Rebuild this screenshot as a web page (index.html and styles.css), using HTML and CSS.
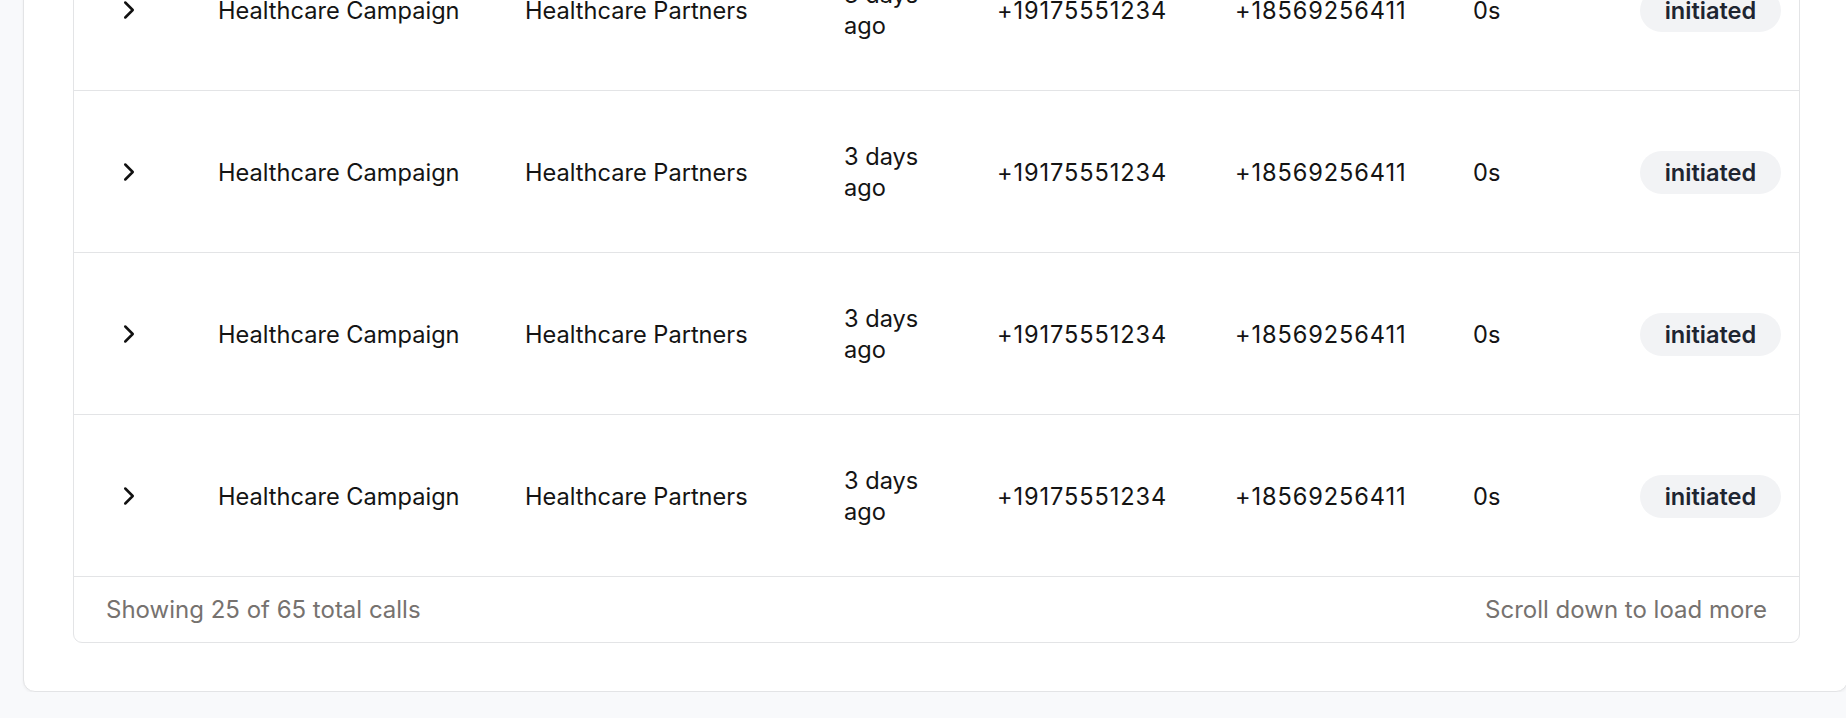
FILE: index.html
```html
<!DOCTYPE html>
<html lang="en">
<head>
<meta charset="utf-8">
<title>Calls</title>
<link rel="stylesheet" href="styles.css">
</head>
<body>
<div class="page">
  <section class="card">
    <div class="table">
      <div class="row">
        <div class="cell chev"><svg viewBox="0 0 24 24" width="30" height="30"><path d="m9 18 6-6-6-6"/></svg></div>
        <div class="cell c1">Healthcare Campaign</div>
        <div class="cell c2">Healthcare Partners</div>
        <div class="cell c3">3 days ago</div>
        <div class="cell phone">+19175551234</div>
        <div class="cell phone">+18569256411</div>
        <div class="cell c6">0s</div>
        <div class="cell c7"><span class="badge">initiated</span></div>
      </div>
      <div class="row">
        <div class="cell chev"><svg viewBox="0 0 24 24" width="30" height="30"><path d="m9 18 6-6-6-6"/></svg></div>
        <div class="cell c1">Healthcare Campaign</div>
        <div class="cell c2">Healthcare Partners</div>
        <div class="cell c3">3 days ago</div>
        <div class="cell phone">+19175551234</div>
        <div class="cell phone">+18569256411</div>
        <div class="cell c6">0s</div>
        <div class="cell c7"><span class="badge">initiated</span></div>
      </div>
      <div class="row">
        <div class="cell chev"><svg viewBox="0 0 24 24" width="30" height="30"><path d="m9 18 6-6-6-6"/></svg></div>
        <div class="cell c1">Healthcare Campaign</div>
        <div class="cell c2">Healthcare Partners</div>
        <div class="cell c3">3 days ago</div>
        <div class="cell phone">+19175551234</div>
        <div class="cell phone">+18569256411</div>
        <div class="cell c6">0s</div>
        <div class="cell c7"><span class="badge">initiated</span></div>
      </div>
      <div class="row">
        <div class="cell chev"><svg viewBox="0 0 24 24" width="30" height="30"><path d="m9 18 6-6-6-6"/></svg></div>
        <div class="cell c1">Healthcare Campaign</div>
        <div class="cell c2">Healthcare Partners</div>
        <div class="cell c3">3 days ago</div>
        <div class="cell phone">+19175551234</div>
        <div class="cell phone">+18569256411</div>
        <div class="cell c6">0s</div>
        <div class="cell c7"><span class="badge">initiated</span></div>
      </div>
      <div class="footer">
        <span>Showing 25 of 65 total calls</span>
        <span>Scroll down to load more</span>
      </div>
    </div>
  </section>
</div>
</body>
</html>
```

FILE: styles.css
```css
html, body {
  margin: 0;
  padding: 0;
}
body {
  background: #f8f9fb;
  font-family: Inter, "Noto Sans", sans-serif;
  color: #141414;
  overflow: hidden;
}
.page {
  padding-left: 23px;
  margin-top: -73.5px;
}
.card {
  width: 1825px;
  box-sizing: border-box;
  background: #fff;
  border: 1px solid #e3e4e6;
  border-radius: 12px;
  box-shadow: 0 1px 3px rgba(0,0,0,0.05);
  padding: 0 48px 48px 49px;
}
.table {
  border: 1px solid #e3e4e6;
  border-radius: 9px;
  width: 1727px;
  box-sizing: border-box;
}
.row {
  display: grid;
  grid-template-columns: 120px 307px 319px 153px 238px 238px 167px 1fr;
  box-sizing: border-box;
  height: 162.1px;
  padding-top: 2px;
  border-bottom: 1px solid #e3e4e6;
  align-items: center;
  font-size: 23.6px;
  line-height: 31px;
}
.cell {
  padding: 0 24px;
  min-width: 0;
}
.phone {
  letter-spacing: 0.9px;
}
.chev {
  padding-left: 40px;
  display: flex;
  align-items: center;
}
.chev svg {
  fill: none;
  stroke: #111;
  stroke-width: 2;
  stroke-linecap: round;
  stroke-linejoin: round;
}
.c7 {
  display: flex;
  justify-content: flex-end;
  padding-right: 18px;
}
.badge {
  display: inline-flex;
  align-items: center;
  justify-content: center;
  width: 145px;
  height: 43px;
  border-radius: 22px;
  background: #f2f3f5;
  color: #1e2531;
  font-weight: 600;
  font-size: 23.6px;
}
.footer {
  display: flex;
  justify-content: space-between;
  align-items: center;
  height: 65px;
  padding: 0 32px;
  font-size: 24px;
  color: #76726f;
}
```
